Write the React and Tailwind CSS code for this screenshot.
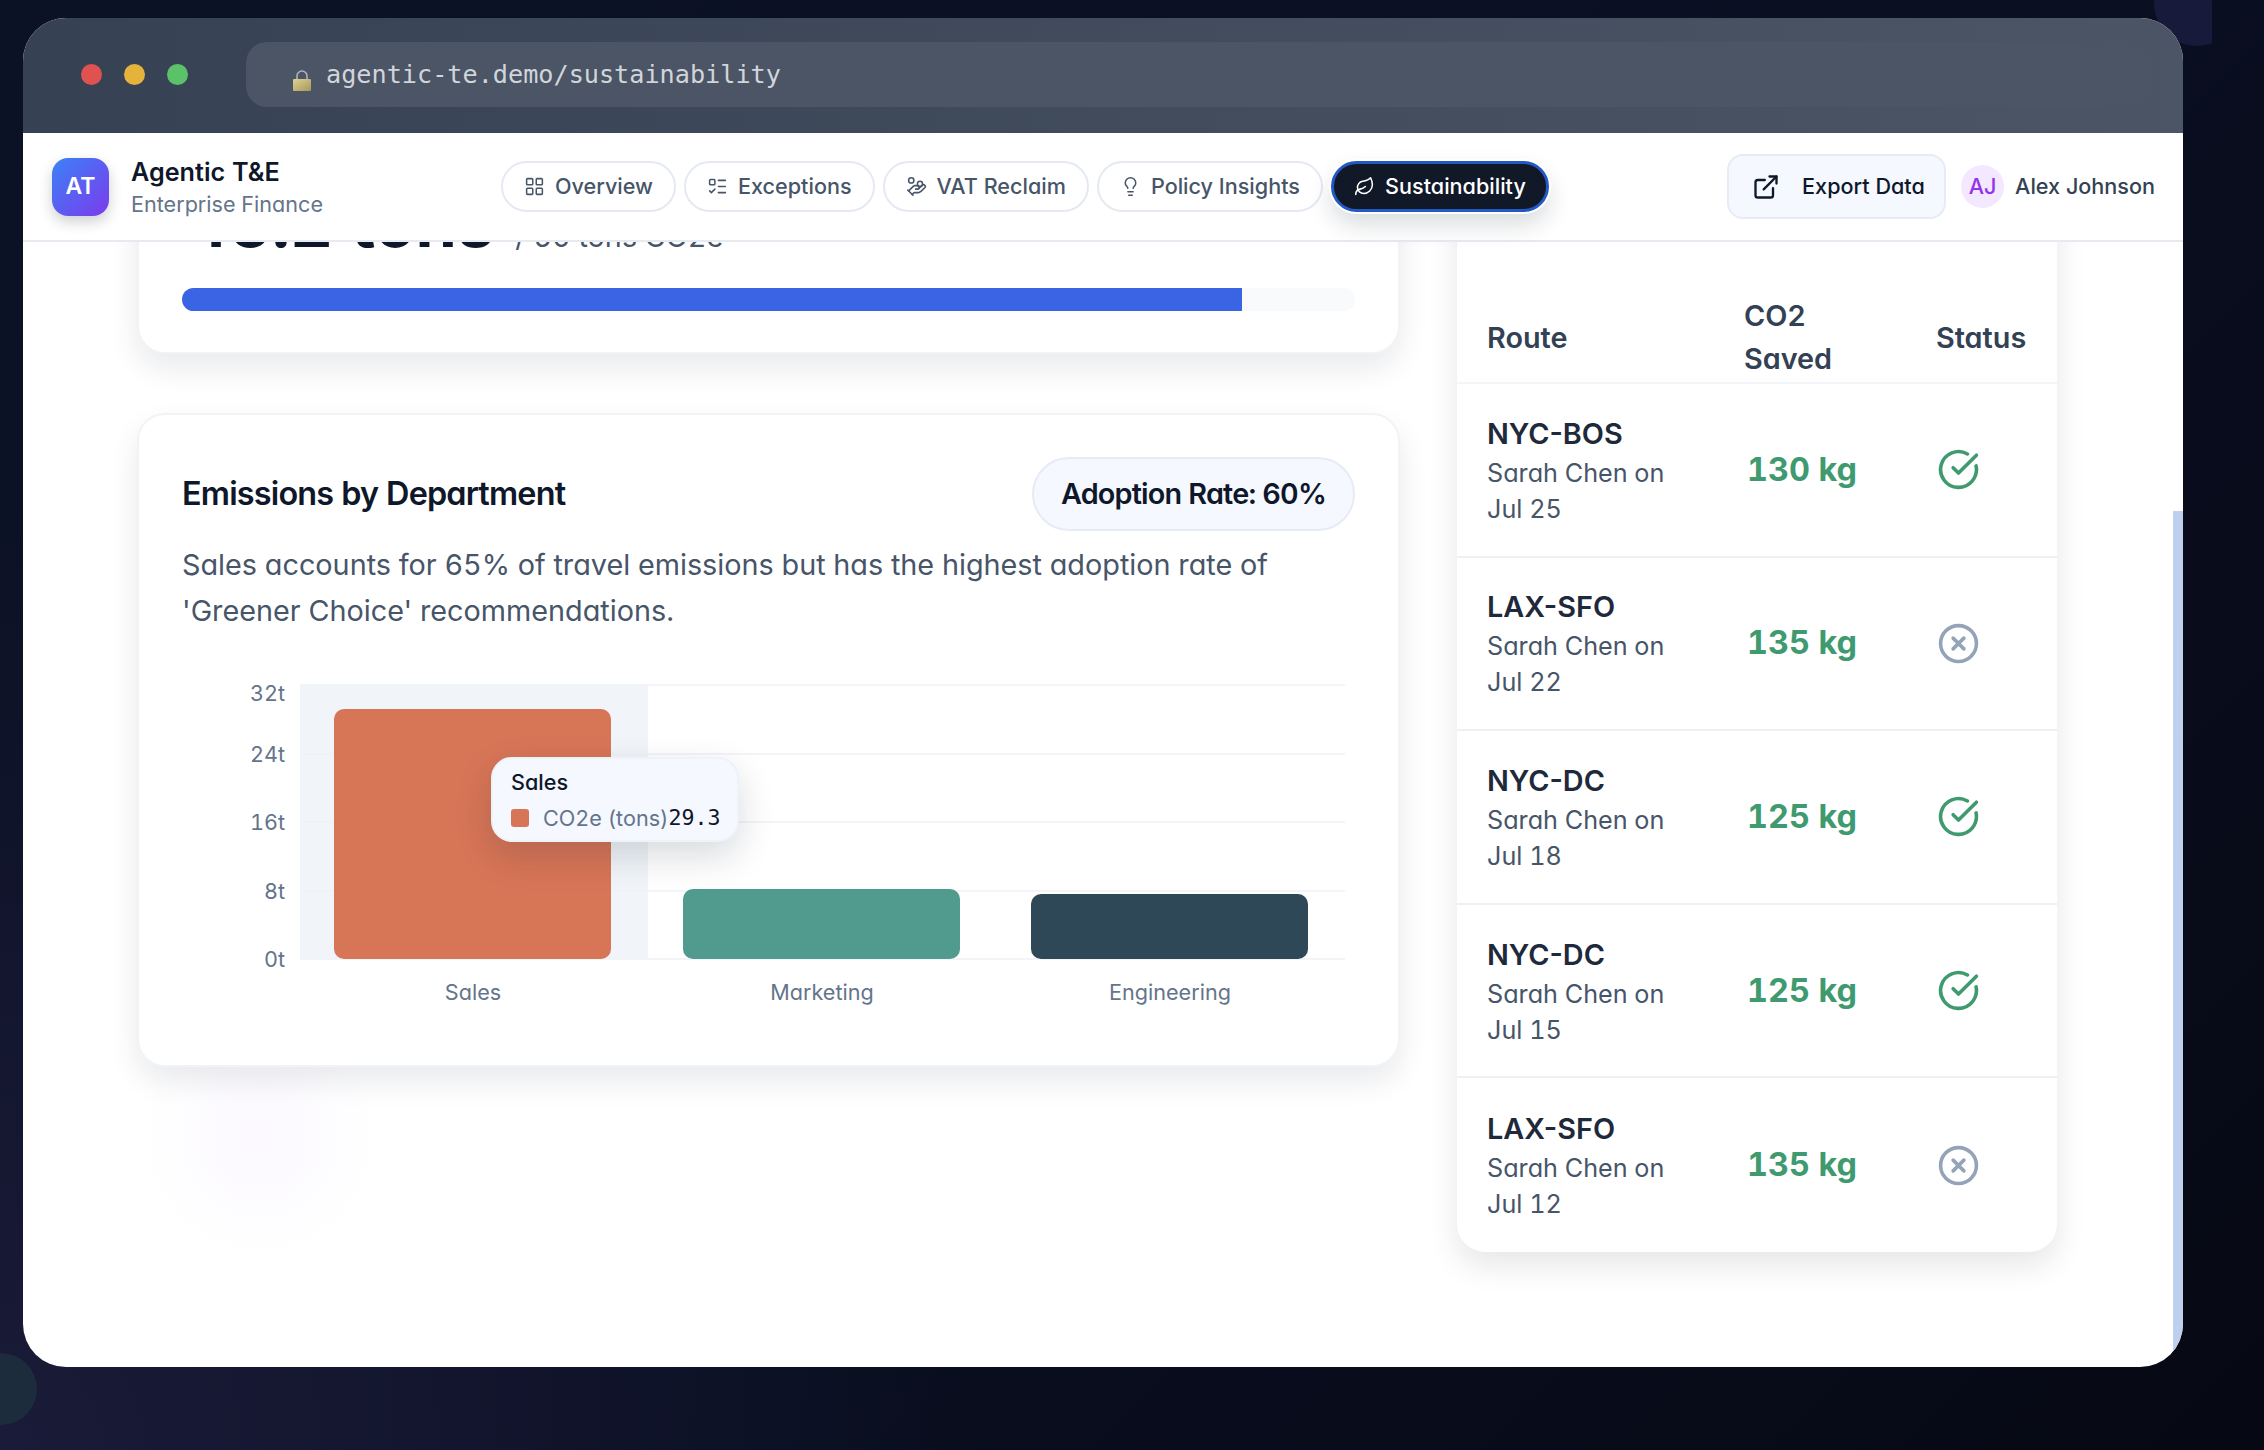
import React from "react";
import { LayoutGrid, ListTodo, HandCoins, Lightbulb, Leaf, ExternalLink, CircleCheckBig, CircleX } from "lucide-react";

const navItems = [
  { label: "Overview", icon: LayoutGrid },
  { label: "Exceptions", icon: ListTodo },
  { label: "VAT Reclaim", icon: HandCoins },
  { label: "Policy Insights", icon: Lightbulb },
  { label: "Sustainability", icon: Leaf, active: true },
];

const trips = [
  { route: "NYC-BOS", date: "Jul 25", saved: "130 kg", ok: true },
  { route: "LAX-SFO", date: "Jul 22", saved: "135 kg", ok: false },
  { route: "NYC-DC", date: "Jul 18", saved: "125 kg", ok: true },
  { route: "NYC-DC", date: "Jul 15", saved: "125 kg", ok: true },
  { route: "LAX-SFO", date: "Jul 12", saved: "135 kg", ok: false },
];

function NavPill({ item }) {
  const Icon = item.icon;
  if (item.active) {
    return (
      <button className="flex h-[51px] w-[218px] items-center justify-center gap-[10px] rounded-full border-[3px] border-[#2259c4] bg-[#111827] text-[21.6px] font-medium text-white shadow-[0_0_0_2px_#fff,0_12px_24px_rgba(15,23,42,0.16)]">
        <Icon size={21} strokeWidth={1.75} />
        {item.label}
      </button>
    );
  }
  return (
    <button className="flex h-[51px] items-center gap-[10px] rounded-full border-2 border-[#e5e9f2] bg-white px-[21px] text-[21.6px] font-medium text-[#475569]">
      <Icon size={21} strokeWidth={1.75} />
      {item.label}
    </button>
  );
}

function LockIcon() {
  return (
    <svg width="18" height="22" viewBox="0 0 18 22" className="mt-[11px] shrink-0">
      <defs>
        <linearGradient id="lockBody" x1="0" y1="0" x2="1" y2="1">
          <stop offset="0" stopColor="#dcd394" />
          <stop offset="1" stopColor="#a8975a" />
        </linearGradient>
      </defs>
      <path d="M4 11V7a5 5 0 0 1 10 0v4" fill="none" stroke="#aeb4bd" strokeWidth="1.6" />
      <rect x="0" y="10" width="18" height="12" rx="1" fill="url(#lockBody)" />
    </svg>
  );
}

function EmissionsChart() {
  const grid = [
    { y: 686, label: "32t", labelY: 702 },
    { y: 755, label: "24t", labelY: 763 },
    { y: 823, label: "16t", labelY: 831 },
    { y: 892, label: "8t", labelY: 900 },
    { y: 960, label: "0t", labelY: 968 },
  ];
  const bars = [
    { x: 334, y: 710, color: "#d77557", label: "Sales" },
    { x: 683, y: 890, color: "#509b8e", label: "Marketing" },
    { x: 1031, y: 895, color: "#2f4858", label: "Engineering" },
  ];
  return (
    <div className="relative mt-[25px] h-[370px] w-[1259px]">
      <svg width="1259" height="370" viewBox="139 660 1259 370" className="block">
        <rect x="300" y="686" width="348" height="274" fill="#f1f5f9" />
        {grid.map((g) => (
          <g key={g.label}>
            <line x1="300" x2="1345" y1={g.y} y2={g.y} stroke="#eef1f6" strokeWidth="1.5" />
            <text x="285" y={g.labelY} textAnchor="end" fontSize="21.6" fill="#64748b">
              {g.label}
            </text>
          </g>
        ))}
        {bars.map((b) => (
          <g key={b.label}>
            <path d={`M${b.x} 950 V${b.y + 10} a10 10 0 0 1 10 -10 H${b.x + 267} a10 10 0 0 1 10 10 V950 a10 10 0 0 1 -10 10 H${b.x + 10} a10 10 0 0 1 -10 -10 Z`} fill={b.color} />
            <text x={b.x + 139} y="1001" textAnchor="middle" fontSize="21.6" fill="#64748b">
              {b.label}
            </text>
          </g>
        ))}
      </svg>
      <div className="absolute left-[352px] top-[98px] h-[85px] w-[248px] rounded-[21px] border-2 border-[#eef2f9] bg-[#f5f8fe] pl-[18px] pt-[7px] shadow-[0_14px_36px_rgba(15,23,42,0.16)]">
        <div className="text-[21.6px] font-medium leading-[32px] text-[#0f172a]">Sales</div>
        <div className="mt-[4px] flex items-center text-[21.6px] leading-[32px]">
          <span className="mr-[14px] h-[18px] w-[18px] rounded-[3px] bg-[#d77557]" />
          <span className="text-[#64748b]">CO2e (tons)</span>
          <span className="font-['DejaVu_Sans_Mono',monospace] text-[#0f172a]">29.3</span>
        </div>
      </div>
    </div>
  );
}

function TripRow({ trip, last }) {
  return (
    <div className={`flex h-[173.6px] items-center ${last ? "" : "border-b-2 border-[#eef0f6]"}`}>
      <div className="w-[286px] pl-[30px]">
        <div className="text-[28.8px] font-semibold leading-[42px] text-[#1e293b] [font-feature-settings:'cv11']">{trip.route}</div>
        <div className="w-[200px] text-[25.2px] leading-[36px] text-[#475569]">
          Sarah Chen on {trip.date}
        </div>
      </div>
      <div className="w-[194px] pl-[4px] text-[32.4px] font-bold leading-[42px] text-[#3f9a6f]">{trip.saved}</div>
      <div className="flex items-center">
        {trip.ok ? (
          <CircleCheckBig size={43} strokeWidth={2} className="text-[#3f9a6f]" />
        ) : (
          <CircleX size={43} strokeWidth={2} className="text-[#94a3b8]" />
        )}
      </div>
    </div>
  );
}

export default function App() {
  return (
    <div className="relative h-[1450px] w-[2264px] overflow-hidden bg-[radial-gradient(circle_at_0%_100%,#1a1b38_0%,transparent_35%),linear-gradient(135deg,#0c1226_0%,#0a0f22_55%,#060913_100%)] pl-[23px] pt-[18px] font-['Inter',sans-serif] [font-feature-settings:'cv11','tnum']">
      <div className="absolute left-[2154px] top-0 h-[46px] w-[58px] overflow-hidden">
        <div className="absolute -top-[40px] left-0 h-[86px] w-[86px] rounded-full bg-[#171a3a]" />
      </div>
      <div className="absolute left-[-35px] top-[1353px] h-[72px] w-[72px] rounded-full bg-[#1c2c3d]" />

      <div className="relative flex h-[1349px] w-[2160px] flex-col overflow-hidden rounded-[43px] bg-white">
        {/* browser bar */}
        <div className="flex h-[115px] shrink-0 items-center bg-[linear-gradient(90deg,#364153,#4b5565)] pb-[2px] pl-[58px]">
          <div className="flex gap-[22px]">
            <span className="h-[21px] w-[21px] rounded-full bg-[#e0524f]" />
            <span className="h-[21px] w-[21px] rounded-full bg-[#e3b33c]" />
            <span className="h-[21px] w-[21px] rounded-full bg-[#5cc269]" />
          </div>
          <div className="ml-[58px] flex h-[65px] w-[1906px] items-center gap-[15px] rounded-[21px] bg-[#4b5565] pl-[47px]">
            <LockIcon />
            <span className="font-['DejaVu_Sans_Mono',monospace] text-[25.2px] text-[#d1d5db]">agentic-te.demo/sustainability</span>
          </div>
        </div>

        {/* app header */}
        <div className="relative z-10 flex h-[109px] shrink-0 items-center border-b-2 border-[#e8eaf1] bg-white pr-[28px]">
          <div className="ml-[29px] flex h-[58px] w-[57px] items-center justify-center rounded-[16px] bg-[linear-gradient(135deg,#3b82f6,#7c3aed)] text-[23px] font-semibold text-white shadow-[0_6px_14px_rgba(15,23,42,0.2)]">
            AT
          </div>
          <div className="ml-[22px] w-[370px]">
            <div className="text-[25.2px] font-semibold leading-[35px] text-[#0f172a]">Agentic T&amp;E</div>
            <div className="text-[21.6px] leading-[28px] text-[#64748b]">Enterprise Finance</div>
          </div>
          <div className="flex gap-[8px]">
            {navItems.map((item) => (
              <NavPill key={item.label} item={item} />
            ))}
          </div>
          <button className="ml-auto flex h-[65px] w-[219px] items-center gap-[22px] rounded-[16px] border-2 border-[#e6ebf5] bg-[#f5f8fe] pl-[23px] text-[21.6px] font-medium text-[#0f172a]">
            <ExternalLink size={28} strokeWidth={2} />
            Export Data
          </button>
          <div className="ml-[15px] flex h-[43px] w-[43px] items-center justify-center rounded-full bg-[#f3e8ff] text-[21.6px] font-medium text-[#9333ea]">
            AJ
          </div>
          <span className="ml-[11px] text-[21.6px] font-medium text-[#334155]">Alex Johnson</span>
        </div>

        {/* scrolled page */}
        <div className="relative min-h-0 flex-1 overflow-hidden">
          <div className="absolute left-[117px] top-[777px] h-[240px] w-[240px] rounded-full bg-[radial-gradient(circle,#fbf8ff_0%,rgba(251,248,255,0)_70%)]" />
          <div className="relative -mt-[70px] flex items-start pl-[114px]">
            <div className="w-[1263px]">
              <div className="flex h-[182px] flex-col justify-end rounded-[28px] border-2 border-[#f1f3f7] bg-white px-[43px] pb-[41px] shadow-[0_14px_30px_rgba(15,23,42,0.09)]">
                <div className="flex items-baseline pl-[4px] leading-[80px]">
                  <span className="text-[66.6px] font-bold text-[#0f172a]">45.2 tons</span>
                  <span className="ml-[21px] text-[28.8px] text-[#475569]">/ 50 tons CO2e</span>
                </div>
                <div className="mt-[11px] h-[23px] shrink-0 overflow-hidden rounded-full bg-[#f8fafc]">
                  <div className="h-full w-[90.4%] bg-[#3b64e4]" />
                </div>
              </div>

              <div className="mt-[59px] h-[654px] rounded-[28px] border-2 border-[#f1f3f7] bg-white shadow-[0_14px_30px_rgba(15,23,42,0.09)]">
                <div className="flex items-center justify-between px-[43px] pt-[42px]">
                  <h2 className="text-[32.4px] font-semibold tracking-[-0.82px] text-[#0f172a]">Emissions by Department</h2>
                  <div className="flex h-[74px] w-[323px] items-center justify-center rounded-full border-2 border-[#e6ebf5] bg-[#f5f8fe] text-[28.8px] font-semibold tracking-[-0.8px] text-[#0f172a]">
                    Adoption Rate: 60%
                  </div>
                </div>
                <p className="mt-[11px] w-[1170px] pl-[43px] text-[28.8px] leading-[46px] text-[#475569]">
                  Sales accounts for 65% of travel emissions but has the highest adoption rate of 'Greener Choice' recommendations.
                </p>
                <EmissionsChart />
              </div>
            </div>

            <div className="ml-[57px] mt-[-100px] w-[600px] rounded-[28px] bg-white shadow-[0_14px_30px_rgba(15,23,42,0.1)]">
              <div className="h-[220px]" />
              <div className="flex h-[92px] items-center border-b-2 border-[#f4f5f9] text-[28.8px] font-semibold leading-[43px] text-[#334155]">
                <div className="w-[287px] pl-[30px]">Route</div>
                <div className="w-[192px] pr-[80px]">CO2 Saved</div>
                <div>Status</div>
              </div>
              {trips.map((trip, i) => (
                <TripRow key={i} trip={trip} last={i === trips.length - 1} />
              ))}
            </div>
          </div>
          {/* scrollbar */}
          <div className="absolute bottom-0 right-0 top-[269px] w-[10px] bg-[#bfcfee]" />
        </div>
      </div>
    </div>
  );
}
